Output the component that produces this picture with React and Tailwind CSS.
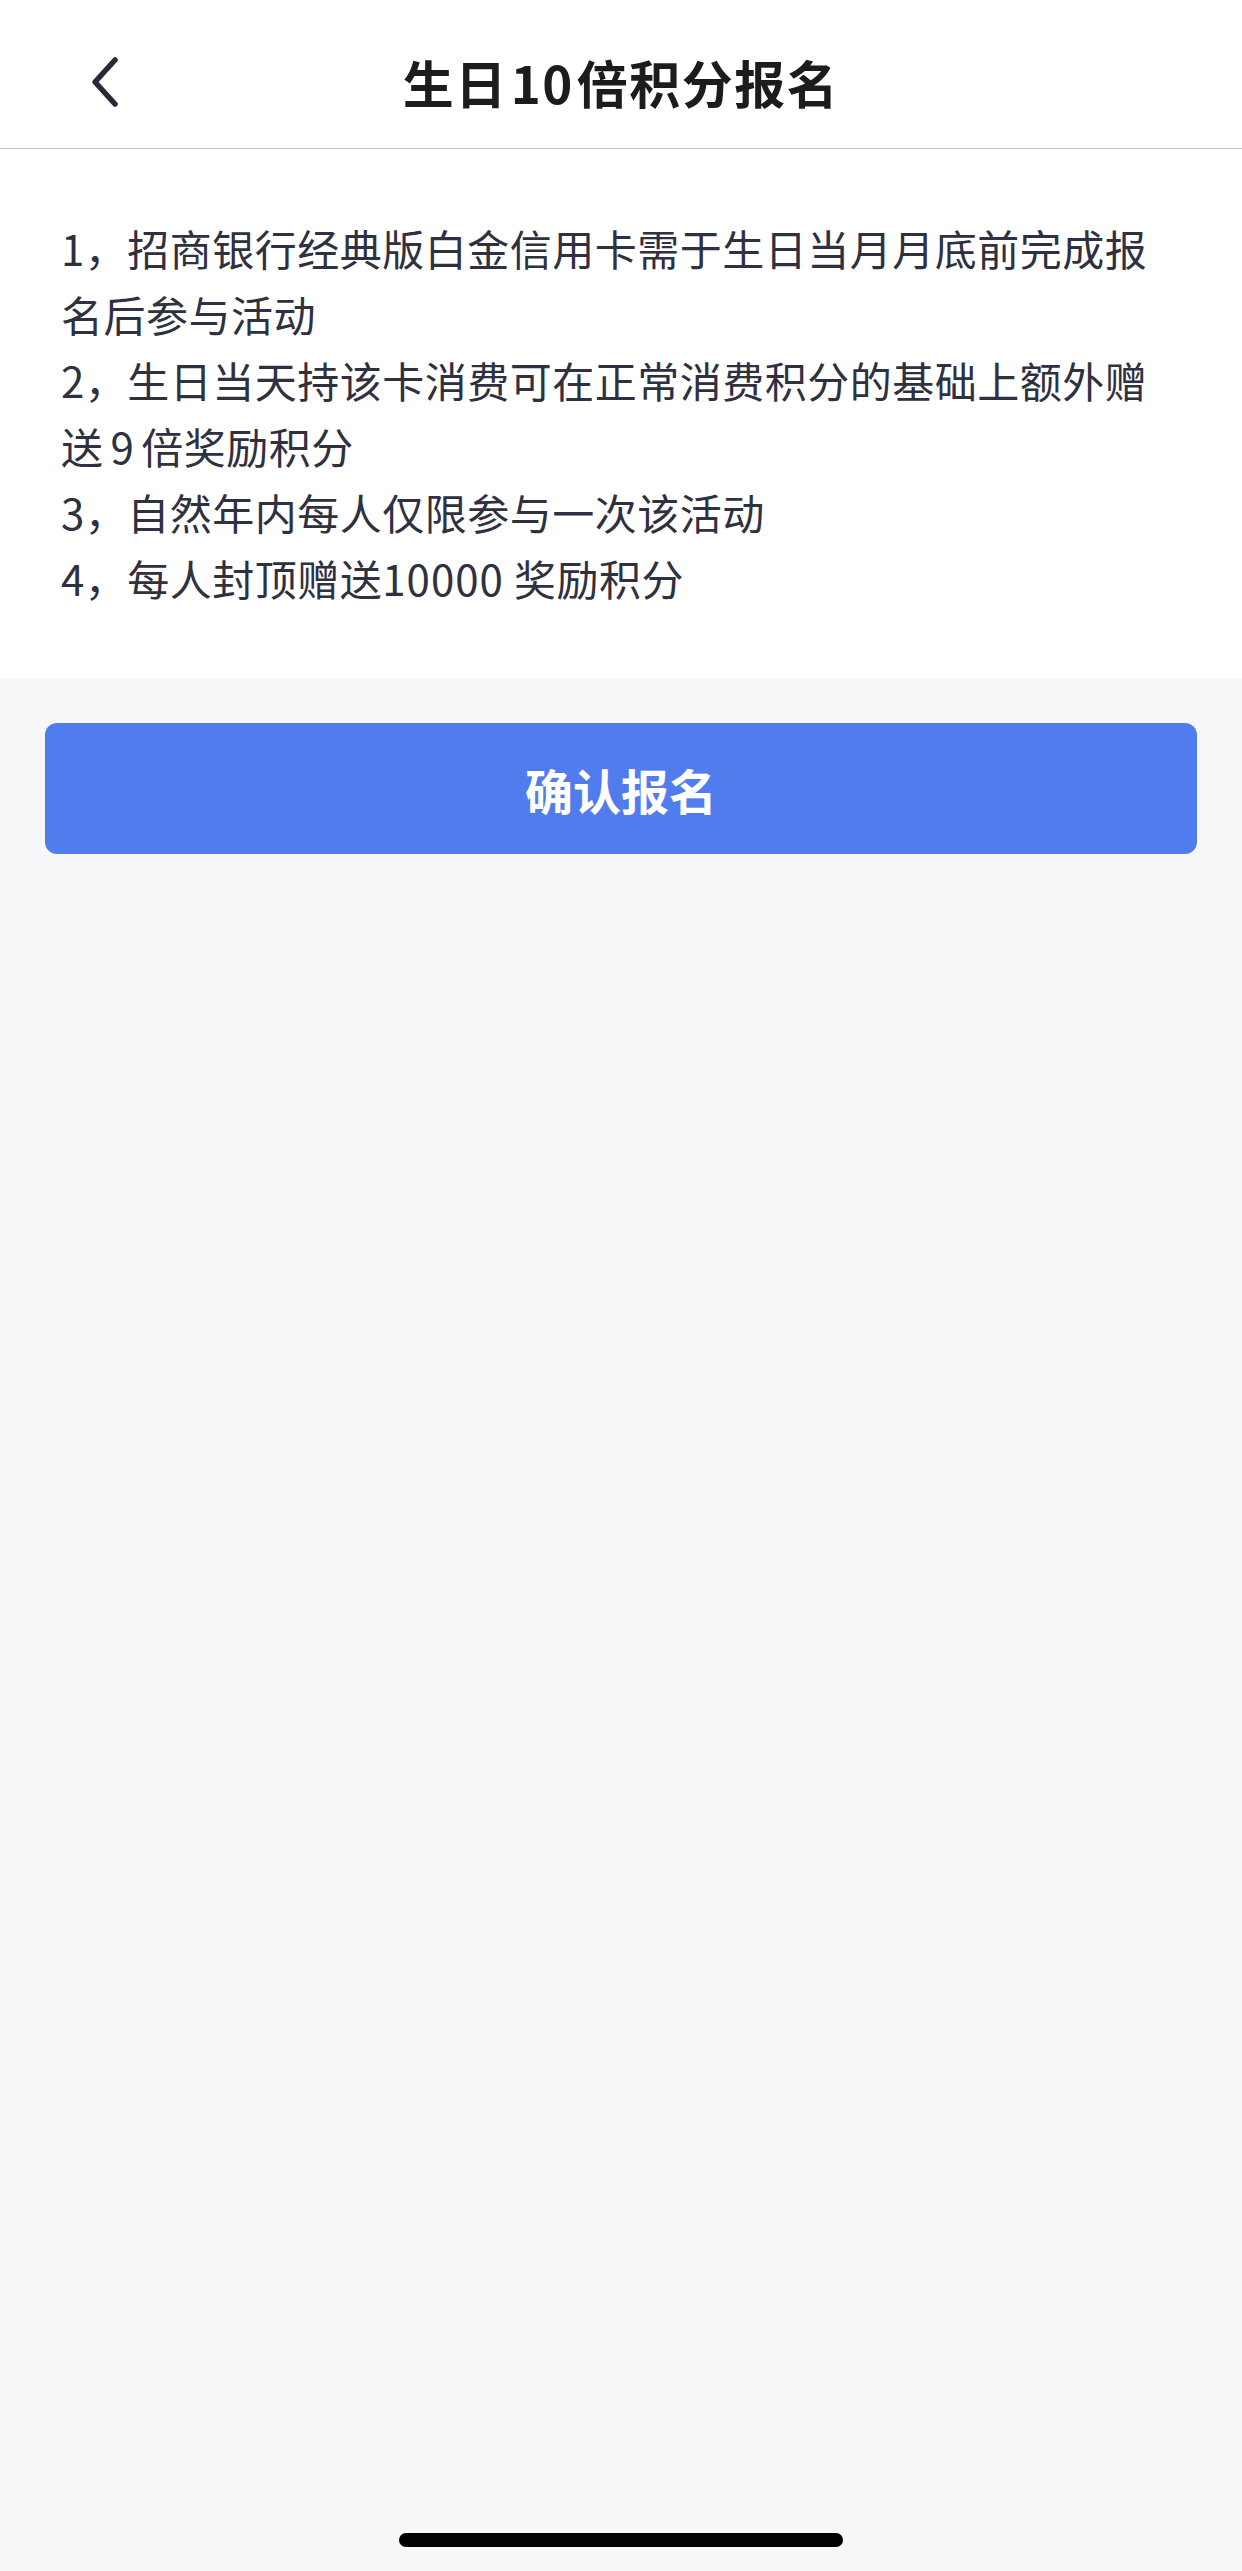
import React from 'react';

const FONT = { fontFamily: '"Noto Sans CJK SC", "Noto Sans", sans-serif' };

const RULES = [
  <>1，招商银行经典版白金信用卡需于生日当月月底前完成报名后参与活动</>,
  <>
    2，生日当天持该卡消费可在正常消费积分的基础上额外赠送<span className="px-[7px]">9</span>倍奖励积分
  </>,
  <>3，自然年内每人仅限参与一次该活动</>,
  <>
    4，每人封顶赠送<span className="pr-[10px] tracking-[1px]">10000</span>奖励积分
  </>,
];

const BackIcon = () => (
  <svg width="32" height="56" viewBox="0 0 32 56" fill="none">
    <path d="M26 6 L6 28 L26 50" stroke="#282a3a" strokeWidth="5.5" strokeLinecap="round" strokeLinejoin="round" />
  </svg>
);

export default function App() {
  return (
    <div className="min-h-[2571px] w-full bg-[#f6f7f9] flex flex-col" style={FONT}>
      {/* Nav bar */}
      <div className="bg-white h-[148px] pt-[16px] grid grid-cols-[1fr_auto_1fr] items-center">
        <div className="pl-[89px] flex items-center">
          <BackIcon />
        </div>
        <h1 className="text-[51px] leading-none font-semibold tracking-[1.5px] text-[#1c1c1e]">
          生日<span className="px-[3px]">10</span>倍积分报名
        </h1>
        <div />
      </div>
      <div className="h-px bg-[#c2c2c4]" />

      {/* Rules */}
      <div className="bg-white pt-[66px] pb-[67px] pl-[61px] pr-[80px]">
        {RULES.map((r, i) => (
          <p key={i} className="text-[42px] leading-[66px] tracking-[0.5px] text-[#2f3040]">
            {r}
          </p>
        ))}
      </div>

      {/* Confirm */}
      <div className="px-[45px] pt-[45px]">
        <button className="w-full h-[131px] rounded-[12px] bg-[#507cee] text-white text-[48px] font-semibold flex items-center justify-center">
          确认报名
        </button>
      </div>

      <div className="flex-1" />

      {/* Home indicator */}
      <div className="flex justify-center pb-[24px]">
        <div className="w-[444px] h-[14px] rounded-full bg-black" />
      </div>
    </div>
  );
}
